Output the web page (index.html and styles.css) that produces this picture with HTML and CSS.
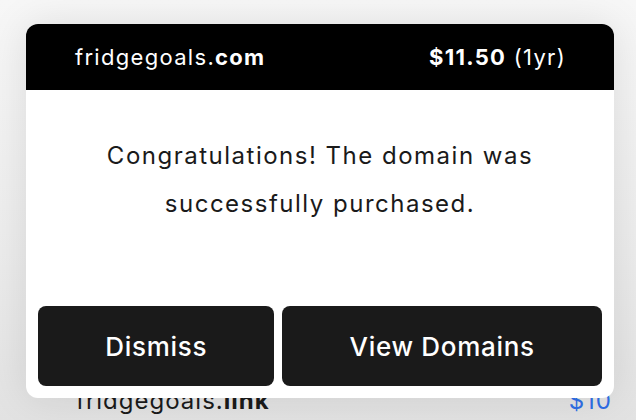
FILE: index.html
```html
<!DOCTYPE html>
<html lang="en">
<head>
  <meta charset="UTF-8">
  <meta name="viewport" content="width=device-width, initial-scale=1.0">
  <title>Domain purchased</title>
  <link rel="stylesheet" href="styles.css">
</head>
<body>
  <div class="page">
    <ul class="results">
      <li class="result">
        <span class="result-name">fridgegoals.<b>link</b></span>
        <span class="result-price">$10</span>
      </li>
    </ul>
  </div>
  <div class="modal">
    <div class="modal-head">
      <span class="domain">fridgegoals.<b>com</b></span>
      <span class="price"><b>$11.50</b> (1yr)</span>
    </div>
    <div class="modal-body">
      <p>Congratulations! The domain was<br>successfully purchased.</p>
    </div>
    <div class="modal-actions">
      <button class="btn">Dismiss</button>
      <button class="btn">View Domains</button>
    </div>
  </div>
</body>
</html>
```

FILE: styles.css
```css
body {
  margin: 0;
  height: 420px;
  overflow: hidden;
  font-family: Inter, 'Liberation Sans', sans-serif;
  color: #1a1a1a;
  background: linear-gradient(180deg, #f7f7f7 0%, #ececec 60%, #e2e2e2 100%);
  position: relative;
}
.page {
  padding: 384px 24px 0 76px;
}
.results {
  list-style: none;
  margin: 0;
  padding: 0;
}
.result {
  display: flex;
  justify-content: space-between;
  font-size: 24px;
  letter-spacing: 1px;
  line-height: 34px;
}
.result-price {
  color: #2f6ee6;
}
.modal {
  position: absolute;
  top: 24px;
  left: 26px;
  width: 588px;
  height: 374px;
  display: flex;
  flex-direction: column;
  background: #fff;
  border-radius: 12px;
  overflow: hidden;
  box-shadow: 0 0 40px rgba(0, 0, 0, 0.1);
}
.modal-head {
  height: 66px;
  flex: none;
  display: flex;
  align-items: center;
  justify-content: space-between;
  padding: 0 48px 0 49px;
  background: #000;
  color: #fff;
  font-size: 22px;
  letter-spacing: 1.3px;
}
.modal-body {
  flex: 1;
  padding-top: 42px;
  text-align: center;
  font-size: 24px;
  letter-spacing: 1.5px;
}
.modal-body p {
  margin: 0;
  line-height: 48px;
}
.modal-actions {
  display: flex;
  gap: 8px;
  padding: 12px;
}
.btn {
  flex: 1 1 auto;
  height: 80px;
  border: none;
  border-radius: 8px;
  background: #1a1a1a;
  color: #fff;
  font-family: inherit;
  font-size: 26px;
  font-weight: 500;
  letter-spacing: 0.7px;
  cursor: pointer;
}
```
